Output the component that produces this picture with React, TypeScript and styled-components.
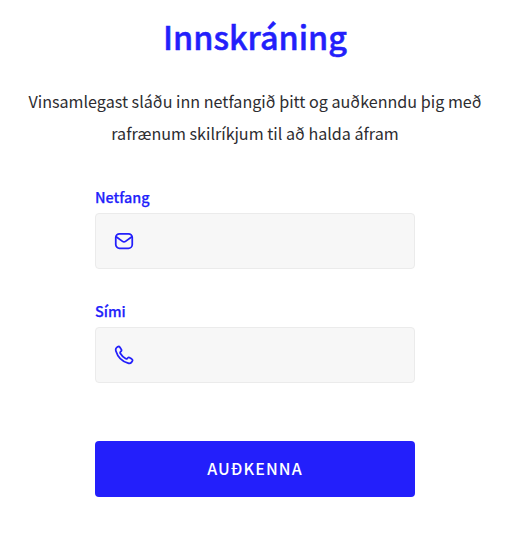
import React from "react";
import styled, { createGlobalStyle } from "styled-components";

const blue = "#231ffb";

const GlobalStyle = createGlobalStyle`
  * { box-sizing: border-box; }
  body {
    margin: 0;
    background: #fff;
    color: #2d2c30;
    font-family: "Noto Sans CJK SC", "Noto Sans CJK JP", "Open Sans", sans-serif;
  }
`;

const Page = styled.main`
  display: flex;
  flex-direction: column;
  align-items: center;
  width: 510px;
  height: 535px;
  padding-top: 13px;
`;

const Title = styled.h1`
  margin: 0;
  height: 47px;
  line-height: 46px;
  font-size: 32.4px;
  font-weight: 500;
  color: ${blue};
  -webkit-text-stroke: 0.5px ${blue};
  white-space: nowrap;
`;

const Intro = styled.p`
  margin: 25px 0 0;
  font-size: 16.14px;
  line-height: 32px;
  text-align: center;
  white-space: nowrap;
`;

const Form = styled.form`
  display: flex;
  flex-direction: column;
  width: 320px;
  margin-top: 37px;
`;

const Field = styled.label`
  display: flex;
  flex-direction: column;
  margin-bottom: 31px;
`;

const Label = styled.span`
  height: 27px;
  line-height: 22px;
  font-size: 14.4px;
  font-weight: 500;
  color: ${blue};
  -webkit-text-stroke: 0.25px ${blue};
`;

const InputBox = styled.span`
  display: flex;
  align-items: center;
  height: 56px;
  padding: 0 18px;
  gap: 16px;
  border: 1px solid #ebebeb;
  border-radius: 4px;
  background: #f7f7f7;
`;

const Icon = styled.svg`
  flex: none;
  width: 20px;
  height: 20px;
  fill: none;
  stroke: ${blue};
  stroke-width: 1.75;
  stroke-linecap: round;
  stroke-linejoin: round;
`;

const Input = styled.input`
  flex: 1;
  min-width: 0;
  border: 0;
  outline: 0;
  background: transparent;
  font: inherit;
`;

const Submit = styled.button`
  height: 56px;
  margin-top: 27px;
  padding: 0 0 2px;
  border: 0;
  border-radius: 4px;
  background: ${blue};
  color: #fff;
  font-family: inherit;
  font-size: 16px;
  font-weight: 500;
  letter-spacing: 1.1px;
`;

export default function App() {
  return (
    <>
      <GlobalStyle />
      <Page>
        <Title>Innskráning</Title>
        <Intro>
          Vinsamlegast sláðu inn netfangið þitt og auðkenndu þig með
          <br />
          rafrænum skilríkjum til að halda áfram
        </Intro>
        <Form>
          <Field>
            <Label>Netfang</Label>
            <InputBox>
              <Icon viewBox="0 0 20 20">
                <rect x="1.75" y="2.75" width="16.5" height="14.5" rx="3.8" />
                <path d="M2.5 6 L8.5 10.4 Q10 11.5 11.5 10.4 L17.5 6" />
              </Icon>
              <Input type="email" />
            </InputBox>
          </Field>
          <Field>
            <Label>Sími</Label>
            <InputBox>
              <Icon viewBox="0 0 20 20">
                <path d="M2.9 2.4 L3.7 1.8 C4.5 1.3 5.4 1.5 5.9 2.2 L7.2 4.2 C7.7 4.9 7.6 5.7 7 6.3 L6.7 6.6 C6.1 7.2 6 7.9 6.4 8.5 C7.6 10.5 9.5 12.4 11.5 13.6 C12.1 14 12.8 13.9 13.4 13.3 L13.7 13 C14.3 12.4 15.1 12.3 15.8 12.8 L17.8 14.1 C18.5 14.6 18.7 15.5 18.2 16.3 L17.6 17.1 C16.8 18.2 15.4 18.5 14.1 18.1 C8.4 16.4 3.6 11.6 1.9 5.9 C1.5 4.6 1.8 3.2 2.9 2.4 Z" />
              </Icon>
              <Input type="tel" />
            </InputBox>
          </Field>
          <Submit type="button">AUÐKENNA</Submit>
        </Form>
      </Page>
    </>
  );
}
